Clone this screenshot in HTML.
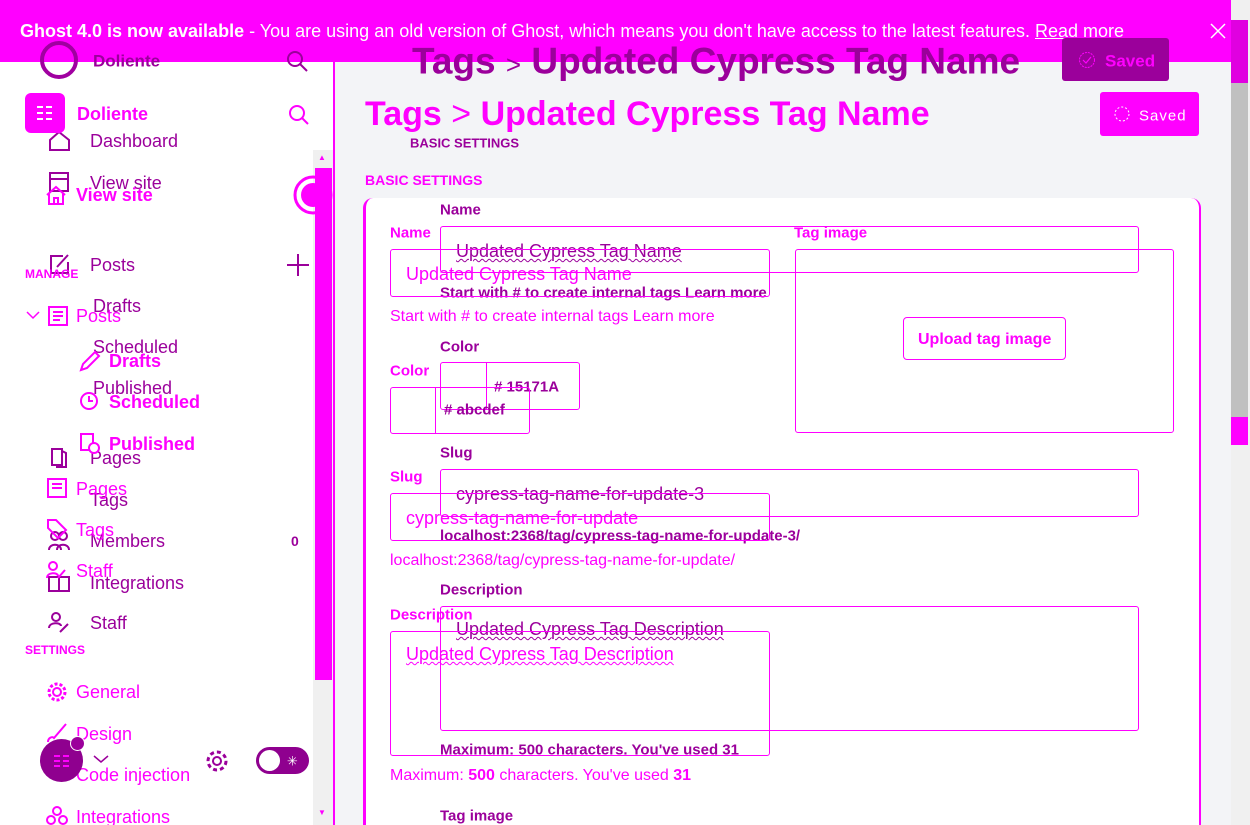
<!DOCTYPE html>
<html><head><meta charset="utf-8"><style>
*{margin:0;padding:0;box-sizing:border-box}
html,body{width:1250px;height:825px;overflow:hidden}
body{position:relative;background:#fff;font-family:"Liberation Sans","DejaVu Sans",sans-serif}
.t{position:absolute;white-space:nowrap;line-height:1;transform:translateY(-50%)}
.d{color:#9b009b}
.b{color:#ff00ff}
.n{font-size:18px}
.bo{font-weight:bold}
.box{position:absolute;border:1px solid #ff00ff;border-radius:3px}
svg{position:absolute;overflow:visible}
.ul{text-decoration:underline;text-decoration-style:wavy;text-decoration-thickness:1px}
</style></head><body>
<div style="position:absolute;left:335px;top:0;width:915px;height:825px;background:#f3f4f7"></div>
<div style="position:absolute;left:333px;top:0;width:2px;height:825px;background:#ff00ff"></div>
<div style="position:absolute;left:363px;top:198px;width:838px;height:627px;background:#fff;border-left:3px solid #ff00ff;border-right:2px solid #ff00ff;border-radius:10px 10px 0 0"></div>
<div style="position:absolute;left:1231px;top:0;width:19px;height:825px;background:#f0f0f0"></div>
<div style="position:absolute;left:1231px;top:20px;width:17px;height:397px;background:#c0c0c0"></div>
<div style="position:absolute;left:1231px;top:20px;width:17px;height:63px;background:#e000e0"></div>
<div style="position:absolute;left:1231px;top:417px;width:17px;height:28px;background:#ff00ff"></div>
<div style="position:absolute;left:313px;top:150px;width:20px;height:675px;background:#f0f0f0"></div>
<div style="position:absolute;left:315px;top:168px;width:17px;height:512px;background:#ff00ff"></div>
<div class="t b" style="left:318px;top:158px;font-size:8px">▲</div>
<div class="t b" style="left:318px;top:813px;font-size:8px">▼</div>
<svg style="left:293px;top:175px" width="40" height="40"><circle cx="20" cy="20" r="18" fill="none" stroke="#ff00ff" stroke-width="3"/><circle cx="20" cy="20" r="12" fill="#ff00ff"/></svg>

<div style="position:absolute;left:0;top:0;width:1231px;height:62px;background:#ff00ff"></div>
<div class="t" style="left:20px;top:31px;font-size:18px;color:#fff"><b>Ghost 4.0 is now available</b> <span style="font-weight:300">- You are using an old version of Ghost, which means you don't have access to the latest features. <u>Read</u> more</span></div>
<svg style="left:1210px;top:23px" width="16" height="16"><path d="M1 1L15 15M15 1L1 15" stroke="#fff" stroke-width="1.5"/></svg>

<svg style="left:40px;top:41px" width="40" height="40"><circle cx="19" cy="19" r="17" fill="none" stroke="#a000a0" stroke-width="4"/></svg>
<div class="t d bo" style="left:93px;top:61px;font-size:17px">Doliente</div>
<svg style="left:286px;top:50px" width="24" height="24"><circle cx="9" cy="9" r="7" fill="none" stroke="#9b009b" stroke-width="2"/><path d="M14 14L21 21" stroke="#9b009b" stroke-width="2"/></svg>
<svg style="left:49px;top:130px" width="22" height="22"><path d="M1 20V10L10 2L20 10V20Z" fill="none" stroke="#9b009b" stroke-width="2"/></svg>
<div class="t d n" style="left:90px;top:141px">Dashboard</div>
<svg style="left:49px;top:172px" width="22" height="22"><rect x="1" y="1" width="18" height="18" fill="none" stroke="#9b009b" stroke-width="2"/><path d="M1 7H19" stroke="#9b009b" stroke-width="2"/></svg>
<div class="t d n" style="left:90px;top:183px">View site</div>
<svg style="left:49px;top:253px" width="22" height="22"><path d="M14 3H2V20H19V9" fill="none" stroke="#9b009b" stroke-width="2"/><path d="M8 14L19 2" stroke="#9b009b" stroke-width="2"/></svg>
<div class="t d n" style="left:90px;top:265px">Posts</div>
<svg style="left:287px;top:254px" width="22" height="22"><path d="M11 0V22M0 11H22" stroke="#9b009b" stroke-width="2"/></svg>
<div class="t d n" style="left:93px;top:306px">Drafts</div>
<div class="t d n" style="left:93px;top:347px">Scheduled</div>
<div class="t d n" style="left:93px;top:388px">Published</div>
<svg style="left:50px;top:447px" width="20" height="22"><path d="M2 2H12V18H2ZM12 4L16 6V20L6 20" fill="none" stroke="#9b009b" stroke-width="2"/></svg>
<div class="t d n" style="left:90px;top:458px">Pages</div>
<div class="t d n" style="left:90px;top:500px">Tags</div>
<svg style="left:48px;top:530px" width="22" height="22"><circle cx="7" cy="6" r="4" fill="none" stroke="#9b009b" stroke-width="2"/><circle cx="15" cy="6" r="4" fill="none" stroke="#9b009b" stroke-width="2"/><path d="M1 20C1 13 13 13 13 20M9 20C9 13 21 13 21 20" fill="none" stroke="#9b009b" stroke-width="2"/></svg>
<div class="t d n" style="left:90px;top:541px">Members</div>
<div class="t d bo" style="left:291px;top:541px;font-size:14px">0</div>
<svg style="left:48px;top:571px" width="22" height="22"><path d="M1 6H21V20H1ZM11 6V20" fill="none" stroke="#9b009b" stroke-width="2"/></svg>
<div class="t d n" style="left:90px;top:583px">Integrations</div>
<svg style="left:48px;top:612px" width="22" height="22"><circle cx="8" cy="5" r="4" fill="none" stroke="#9b009b" stroke-width="2"/><path d="M1 16C1 10 13 10 13 14M12 20L20 12" fill="none" stroke="#9b009b" stroke-width="2"/></svg>
<div class="t d n" style="left:90px;top:623px">Staff</div>

<div style="position:absolute;left:25px;top:93px;width:40px;height:40px;border-radius:6px;background:#ff00ff"></div>
<svg style="left:35px;top:104px" width="20" height="18"><path d="M2 3H18M2 9H18M2 15H18" stroke="#fff" stroke-width="2" stroke-dasharray="6 3"/></svg>
<div class="t b bo" style="left:77px;top:114px;font-size:18px">Doliente</div>
<svg style="left:288px;top:104px" width="24" height="24"><circle cx="9" cy="9" r="7" fill="none" stroke="#ff00ff" stroke-width="2"/><path d="M14 14L20 20" stroke="#ff00ff" stroke-width="2"/></svg>
<svg style="left:45px;top:185px" width="22" height="20"><path d="M2 10L11 2L20 10M4 9V19H18V9M9 19V13H13V19" fill="none" stroke="#ff00ff" stroke-width="2"/></svg>
<div class="t b n bo" style="left:76px;top:195px">View site</div>
<div class="t b bo" style="left:25px;top:274px;font-size:12px">MANAGE</div>
<svg style="left:26px;top:311px" width="14" height="9"><path d="M1 1L7 7L13 1" fill="none" stroke="#ff00ff" stroke-width="1.5"/></svg>
<svg style="left:47px;top:305px" width="22" height="22"><rect x="2" y="2" width="18" height="18" fill="none" stroke="#ff00ff" stroke-width="2"/><path d="M6 7H16M6 11H16M6 15H13" stroke="#ff00ff" stroke-width="2"/></svg>
<div class="t b n" style="left:76px;top:316px">Posts</div>
<svg style="left:79px;top:350px" width="22" height="22"><path d="M2 20L4 14L16 2L20 6L8 18Z" fill="none" stroke="#ff00ff" stroke-width="2"/></svg>
<div class="t b n bo" style="left:109px;top:361px">Drafts</div>
<svg style="left:79px;top:390px" width="22" height="22"><circle cx="10" cy="11" r="8" fill="none" stroke="#ff00ff" stroke-width="2"/><path d="M10 6V11H14" fill="none" stroke="#ff00ff" stroke-width="2"/></svg>
<div class="t b n bo" style="left:109px;top:402px">Scheduled</div>
<svg style="left:79px;top:432px" width="22" height="22"><path d="M2 2H14V18H2Z" fill="none" stroke="#ff00ff" stroke-width="2"/><circle cx="15" cy="16" r="5" fill="#fff" stroke="#ff00ff" stroke-width="2"/></svg>
<div class="t b n bo" style="left:109px;top:444px">Published</div>
<svg style="left:46px;top:477px" width="22" height="22"><rect x="2" y="2" width="18" height="18" fill="none" stroke="#ff00ff" stroke-width="2"/><path d="M6 7H16M6 11H16" stroke="#ff00ff" stroke-width="2"/></svg>
<div class="t b n" style="left:76px;top:489px">Pages</div>
<svg style="left:46px;top:518px" width="22" height="22"><path d="M2 2H10L20 12L12 20L2 10Z" fill="none" stroke="#ff00ff" stroke-width="2"/></svg>
<div class="t b n" style="left:76px;top:530px">Tags</div>
<svg style="left:46px;top:560px" width="22" height="22"><circle cx="7" cy="6" r="4" fill="none" stroke="#ff00ff" stroke-width="2"/><path d="M1 18C1 12 12 12 12 16M12 18L19 10" fill="none" stroke="#ff00ff" stroke-width="2"/></svg>
<div class="t b n" style="left:76px;top:571px">Staff</div>
<div class="t b bo" style="left:25px;top:650px;font-size:12px">SETTINGS</div>
<svg style="left:46px;top:681px" width="22" height="22"><circle cx="11" cy="11" r="4" fill="none" stroke="#ff00ff" stroke-width="2"/><circle cx="11" cy="11" r="8" fill="none" stroke="#ff00ff" stroke-width="3" stroke-dasharray="3 2"/></svg>
<div class="t b n" style="left:76px;top:692px">General</div>
<svg style="left:46px;top:722px" width="22" height="22"><path d="M2 20C2 16 6 14 8 16L20 2" fill="none" stroke="#ff00ff" stroke-width="2"/></svg>
<div class="t b n" style="left:76px;top:734px">Design</div>
<div class="t b n" style="left:76px;top:775px">Code injection</div>
<svg style="left:46px;top:806px" width="22" height="22"><circle cx="11" cy="5" r="4" fill="none" stroke="#ff00ff" stroke-width="2"/><circle cx="5" cy="14" r="4" fill="none" stroke="#ff00ff" stroke-width="2"/><circle cx="17" cy="14" r="4" fill="none" stroke="#ff00ff" stroke-width="2"/></svg>
<div class="t b n" style="left:76px;top:817px">Integrations</div>

<div style="position:absolute;left:40px;top:739px;width:43px;height:43px;border-radius:50%;background:#8f008f"></div>
<svg style="left:52px;top:752px" width="20" height="16"><path d="M2 4H18M2 9H18M2 14H18" stroke="#ff00ff" stroke-width="2" stroke-dasharray="6 3"/></svg>
<div style="position:absolute;left:70px;top:736px;width:15px;height:15px;border-radius:50%;background:#9b009b;border:1px solid #fff"></div>
<svg style="left:93px;top:755px" width="16" height="9"><path d="M1 1L8 7L15 1" fill="none" stroke="#9b009b" stroke-width="1.5"/></svg>
<svg style="left:204px;top:748px" width="26" height="26"><circle cx="13" cy="13" r="4" fill="none" stroke="#9b009b" stroke-width="2"/><circle cx="13" cy="13" r="9" fill="none" stroke="#9b009b" stroke-width="3" stroke-dasharray="4 3"/></svg>
<div style="position:absolute;left:256px;top:747px;width:53px;height:27px;border-radius:14px;background:#8f008f"></div>
<div style="position:absolute;left:259px;top:750px;width:21px;height:21px;border-radius:50%;background:#fff"></div>
<div class="t" style="left:287px;top:761px;font-size:13px;color:#fff">✳</div>

<div class="t d bo" style="left:412px;top:61px;font-size:37px">Tags <span style="font-weight:normal;font-size:26px">&gt;</span> Updated Cypress Tag Name</div>
<div style="position:absolute;left:1062px;top:38px;width:107px;height:43px;border-radius:3px;background:#9b009b"></div>
<svg style="left:1078px;top:51px" width="18" height="18"><circle cx="9" cy="9" r="7.5" fill="none" stroke="#ff00ff" stroke-width="1" stroke-dasharray="2 1"/><path d="M5 9L8 12L13 6" fill="none" stroke="#ff00ff" stroke-width="1.2"/></svg>
<div class="t b bo" style="left:1105px;top:61px;font-size:17px">Saved</div>
<div class="t d bo" style="left:410px;top:143px;font-size:13px">BASIC SETTINGS</div>
<div class="t d bo" style="left:440px;top:210px;font-size:15px">Name</div>
<div class="box" style="left:440px;top:226px;width:699px;height:47px"></div>
<div class="t d n ul" style="left:456px;top:251px">Updated Cypress Tag Name</div>
<div class="t d bo" style="left:440px;top:293px;font-size:15px">Start with # to create internal tags Learn more</div>
<div class="t d bo" style="left:440px;top:347px;font-size:15px">Color</div>
<div class="box" style="left:440px;top:362px;width:140px;height:48px"></div>
<div style="position:absolute;left:486px;top:362px;width:1px;height:48px;background:#ff00ff"></div>
<div class="t d bo" style="left:494px;top:387px;font-size:15px"># 15171A</div>
<div class="t d bo" style="left:444px;top:410px;font-size:15px"># abcdef</div>
<div class="t d bo" style="left:440px;top:453px;font-size:15px">Slug</div>
<div class="box" style="left:440px;top:469px;width:699px;height:48px"></div>
<div class="t d n" style="left:456px;top:494px">cypress-tag-name-for-update-3</div>
<div class="t d bo" style="left:440px;top:536px;font-size:15px">localhost:2368/tag/cypress-tag-name-for-update-3/</div>
<div class="t d bo" style="left:440px;top:590px;font-size:15px">Description</div>
<div class="box" style="left:440px;top:606px;width:699px;height:125px"></div>
<div class="t d n ul" style="left:456px;top:629px">Updated Cypress Tag Description</div>
<div class="t d bo" style="left:440px;top:750px;font-size:15px">Maximum: 500 characters. You've used 31</div>
<div class="t d bo" style="left:440px;top:816px;font-size:15px">Tag image</div>

<div class="t b bo" style="left:365px;top:114px;font-size:34px">Tags <span style="font-weight:normal">&gt;</span> Updated Cypress Tag Name</div>
<div style="position:absolute;left:1100px;top:92px;width:99px;height:44px;border-radius:3px;background:#ff00ff"></div>
<svg style="left:1114px;top:106px" width="16" height="16"><circle cx="8" cy="8" r="7" fill="none" stroke="#fff" stroke-width="1" stroke-dasharray="2 2"/></svg>
<div class="t" style="left:1139px;top:116px;font-size:15px;color:#fff;letter-spacing:1px">Saved</div>
<div class="t b bo" style="left:365px;top:180px;font-size:14px">BASIC SETTINGS</div>
<div class="t b bo" style="left:390px;top:233px;font-size:15px">Name</div>
<div class="box" style="left:390px;top:249px;width:380px;height:48px"></div>
<div class="t b n" style="left:406px;top:274px">Updated Cypress Tag Name</div>
<div class="t b" style="left:390px;top:317px;font-size:16px">Start with # to create internal tags Learn more</div>
<div class="t b bo" style="left:390px;top:371px;font-size:15px">Color</div>
<div class="box" style="left:390px;top:387px;width:140px;height:47px"></div>
<div style="position:absolute;left:435px;top:387px;width:1px;height:47px;background:#ff00ff"></div>
<div class="t b bo" style="left:794px;top:233px;font-size:15px">Tag image</div>
<div class="box" style="left:795px;top:249px;width:379px;height:184px"></div>
<div class="box" style="left:903px;top:317px;width:163px;height:43px;border-radius:4px"></div>
<div class="t b bo" style="left:918px;top:340px;font-size:16px">Upload tag image</div>
<div class="t b bo" style="left:390px;top:477px;font-size:15px">Slug</div>
<div class="box" style="left:390px;top:493px;width:380px;height:48px"></div>
<div class="t b n" style="left:406px;top:518px">cypress-tag-name-for-update</div>
<div class="t b" style="left:390px;top:561px;font-size:16px">localhost:2368/tag/cypress-tag-name-for-update/</div>
<div class="t b bo" style="left:390px;top:615px;font-size:15px">Description</div>
<div class="box" style="left:390px;top:631px;width:380px;height:125px"></div>
<div class="t b n ul" style="left:406px;top:654px">Updated Cypress Tag Description</div>
<div class="t b" style="left:390px;top:776px;font-size:16px">Maximum: <b>500</b> characters. You've used <b>31</b></div>
</body></html>
